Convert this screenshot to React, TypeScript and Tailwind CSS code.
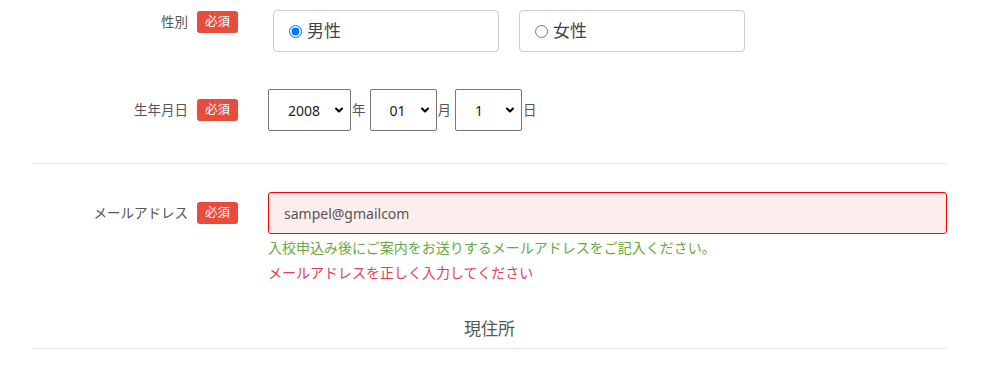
import { ChevronDown } from "lucide-react";

const font = { fontFamily: '"Noto Sans", "Noto Sans CJK JP", sans-serif' };

function Badge() {
  return (
    <span className="inline-flex h-[22px] w-[41px] items-center justify-center rounded-[3px] bg-[#e74c3c] text-[12.5px] leading-none text-white">
      必須
    </span>
  );
}

function Label({ text }: { text: string }) {
  return (
    <div className="flex w-[206px] shrink-0 items-center justify-end gap-[9px]">
      <span className="text-[13.5px] text-[#555]">{text}</span>
      <Badge />
    </div>
  );
}

function Select({ value, options, w }: { value: string; options: string[]; w: string }) {
  return (
    <div className={`relative h-[42px] ${w}`}>
      <select
        defaultValue={value}
        className="h-full w-full appearance-none rounded-[2px] border border-[#767676] bg-white pl-[19px] text-[14px] text-[#222] outline-none"
      >
        {options.map((o) => (
          <option key={o}>{o}</option>
        ))}
      </select>
      <ChevronDown
        className="pointer-events-none absolute right-[6px] top-1/2 h-[12px] w-[12px] -translate-y-1/2 text-black"
        strokeWidth={4}
      />
    </div>
  );
}

function Radio({ label, checked }: { label: string; checked?: boolean }) {
  return (
    <label className="flex h-[42px] w-[226px] items-center rounded-[4px] border border-[#ccc] bg-white pl-[15px]">
      <input type="radio" name="sex" defaultChecked={checked} className="m-0 h-[13px] w-[13px]" />
      <span className="ml-[5px] text-[17px] text-[#444]">{label}</span>
    </label>
  );
}

export default function App() {
  return (
    <div className="h-[370px] w-[981px] bg-white" style={font}>
      <div className="ml-[32px] w-[915px] pt-[10px]">
        {/* gender */}
        <div className="flex items-start">
          <div className="mt-[1px]">
            <Label text="性別" />
          </div>
          <div className="ml-[35px] flex gap-[20px]">
            <Radio label="男性" checked />
            <Radio label="女性" />
          </div>
        </div>

        {/* birthday */}
        <div className="mt-[37px] flex items-center">
          <Label text="生年月日" />
          <div className="ml-[30px] flex items-center text-[13.5px] text-[#555]">
            <Select value="2008" options={["2007", "2008", "2009"]} w="w-[83px]" />
            <span className="ml-[1px] mr-[4px]">年</span>
            <Select value="01" options={["01", "02", "03"]} w="w-[67px]" />
            <span className="ml-[1px] mr-[4px]">月</span>
            <Select value="1" options={["1", "2", "3"]} w="w-[67px]" />
            <span className="ml-[1px]">日</span>
          </div>
        </div>

        <div className="mt-[32px] h-px bg-[#e5e5e5]" />

        {/* email */}
        <div className="mt-[28px] flex items-start">
          <div className="flex h-[42px] items-center">
            <Label text="メールアドレス" />
          </div>
          <div className="ml-[30px] flex w-[679px] flex-col">
            <input
              defaultValue="sampel@gmailcom"
              className="h-[42px] w-full rounded-[3px] border border-[#ff0000] bg-[#fdeeee] pl-[15px] text-[14px] text-[#555] outline-none"
            />
            <p className="mt-[4px] text-[14px] leading-[20px] text-[#6aa83e]">
              入校申込み後にご案内をお送りするメールアドレスをご記入ください。
            </p>
            <p className="mt-[5px] text-[14px] leading-[20px] text-[#e0405a]">
              メールアドレスを正しく入力してください
            </p>
          </div>
        </div>

        <div className="mt-[34px] text-center text-[17px] leading-[24px] text-[#555]">現住所</div>
        <div className="mt-[7px] h-px bg-[#e5e5e5]" />
      </div>
    </div>
  );
}
